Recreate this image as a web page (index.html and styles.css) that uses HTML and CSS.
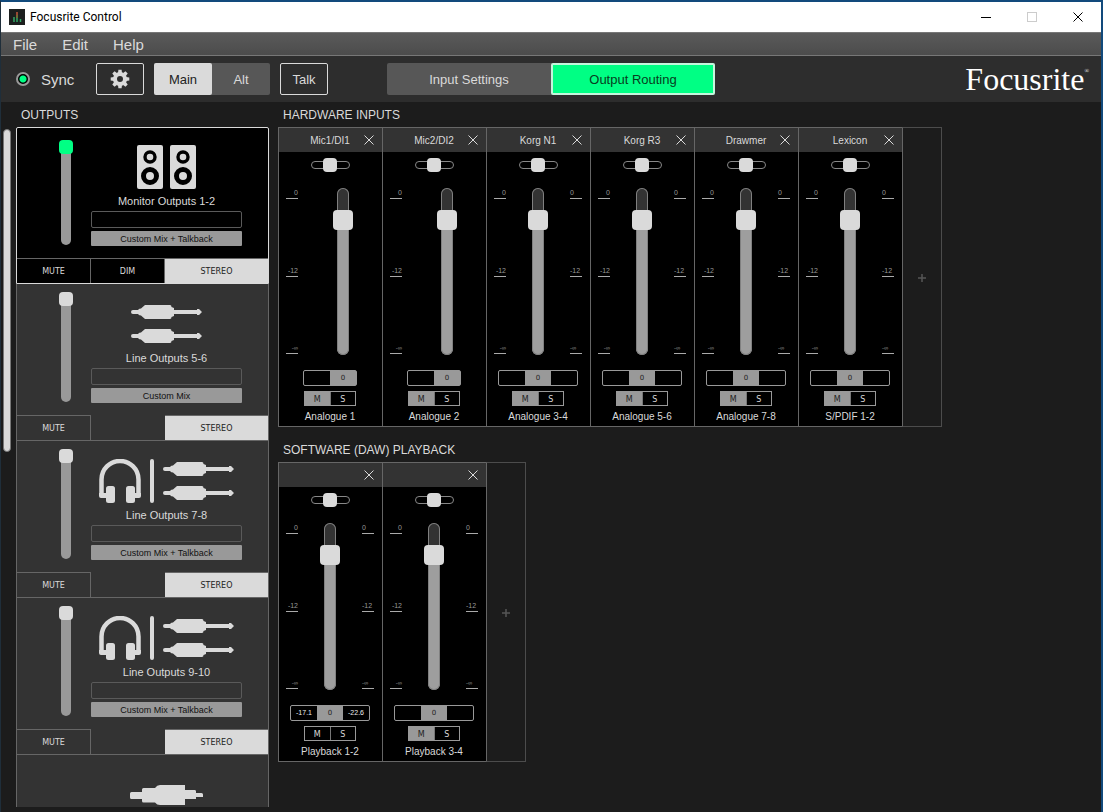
FILE: index.html
```html
<!DOCTYPE html>
<html lang="en">
<head>
<meta charset="utf-8">
<meta name="viewport" content="width=device-width, initial-scale=1">
<title>Focusrite Control</title>
<link rel="stylesheet" href="styles.css">
</head>
<body>
<svg class="sprite" aria-hidden="true">
  <symbol id="x" viewBox="0 0 10 10"><path d="M.5.5l9 9M9.500.5l-9 9" fill="none" stroke="currentColor"/></symbol>
  <symbol id="jack" viewBox="0 0 71 14"><path d="M2 5H7.500V4L10 3.500L14 0H39Q40.500 0 40.500 2L43 3V5H66V4H68L71 7L68 10H66V9H43V11L40.500 12Q40.500 14 39 14H14L10 10.500L7.500 10V9H2Q0 9 0 7T2 5Z"/></symbol>
  <symbol id="jacks" viewBox="0 0 71 38"><use href="#jack" width="71" height="14"/><use href="#jack" y="24" width="71" height="14"/></symbol>
  <symbol id="phones" viewBox="0 0 42 44"><path d="M2.500 37V20.500a18.500 18.500 0 0 1 37 0V37" fill="none" stroke="currentColor" stroke-width="4.500"/><path d="M0 34H8V39H2Q0 39 0 37ZM42 34H34V39H40Q42 39 42 37Z"/><rect x="7" y="27" width="9" height="17" rx="2.500"/><rect x="27" y="27" width="9" height="17" rx="2.500"/></symbol>
  <symbol id="speaker" viewBox="0 0 26 44"><rect width="26" height="44" rx="2"/><g fill="none" stroke="#000"><circle cx="13" cy="12" r="5" stroke-width="3.400"/><circle cx="13" cy="31" r="6.500" stroke-width="5"/></g></symbol>
  <symbol id="rca" viewBox="0 0 73 20"><path d="M1.500 7H12V4.500Q12 3 13.500 3H25Q27 0 30 0H55V5H65Q66 5 66 6.500V8H71.500Q73 8 73 9.500V12H66V14H55V20H30Q27 20 25 17.500H13.500Q12 17.500 12 16V14H1.500Q0 14 0 12.500V8.500Q0 7 1.500 7Z"/></symbol>
  <symbol id="gear" viewBox="-10 -10 20 20"><circle r="5" fill="none" stroke="currentColor" stroke-width="4"/><g id="teeth"><path d="M-2-6L-1.600-9.300H1.600L2-6ZM-2 6L-1.600 9.300H1.600L2 6ZM-6-2L-9.300-1.600V1.600L-6 2ZM6-2L9.300-1.600V1.600L6 2Z"/></g><use href="#teeth" transform="rotate(45)"/></symbol>
</svg>

<div class="window">
  <header class="titlebar">
    <svg class="app-icon" viewBox="0 0 16 16" aria-hidden="true"><rect width="16" height="16" fill="#1c1f1e"/><path d="M5 8V13M11.500 10V13" stroke="#2fa866" stroke-width="1.500"/><path d="M8 3V6" stroke="#c5573a" stroke-width="1.500"/><path d="M8 6V9" stroke="#8a8a3c" stroke-width="1.500"/><path d="M8 9V13" stroke="#2fa866" stroke-width="1.500"/></svg>
    <h1 class="app-title">Focusrite Control</h1>
    <button class="win-btn" aria-label="Minimise"><svg width="10" height="10"><path d="M0 5.500H10" stroke="#000"/></svg></button>
    <button class="win-btn" aria-label="Maximise" disabled><svg width="10" height="10"><rect x=".5" y=".5" width="9" height="9" fill="none" stroke="#ccc"/></svg></button>
    <button class="win-btn" aria-label="Close"><svg width="10" height="10"><use href="#x"/></svg></button>
  </header>

  <nav class="menubar"><button>File</button><button>Edit</button><button>Help</button></nav>

  <div class="toolbar">
    <div class="tools">
      <div class="sync"><span class="led"></span>Sync</div>
      <button class="tool" aria-label="Settings"><svg width="20" height="20"><use href="#gear"/></svg></button>
      <div class="switch"><button class="on">Main</button><button>Alt</button></div>
      <button class="tool">Talk</button>
    </div>
    <div class="tabs"><button>Input Settings</button><button class="active">Output Routing</button></div>
    <div class="logo">Focusrite<sup>®</sup></div>
  </div>

  <main class="content">
    <div class="scrollbar"><div class="scroll-thumb"></div></div>
    <section class="outputs">
      <h2>OUTPUTS</h2>
      <div class="output-list">
        <article class="output selected">
          <div class="output-body">
            <input class="level" type="range" value="100" aria-label="Monitor Outputs 1-2 level">
            <div class="output-info">
              <div class="icons speakers"><svg width="26" height="44"><use href="#speaker"/></svg><svg width="26" height="44"><use href="#speaker"/></svg></div>
              <label for="o1">Monitor Outputs 1-2</label>
              <input class="name-box" id="o1" type="text">
              <button class="source">Custom Mix + Talkback</button>
            </div>
          </div>
          <div class="output-foot"><button>MUTE</button><button>DIM</button><button class="lit">STEREO</button></div>
        </article>
        <article class="output">
          <div class="output-body">
            <input class="level" type="range" value="100" aria-label="Line Outputs 5-6 level">
            <div class="output-info">
              <div class="icons"><svg width="71" height="38"><use href="#jacks"/></svg></div>
              <label for="o2">Line Outputs 5-6</label>
              <input class="name-box" id="o2" type="text">
              <button class="source">Custom Mix</button>
            </div>
          </div>
          <div class="output-foot"><button>MUTE</button><span></span><button class="lit">STEREO</button></div>
        </article>
        <article class="output">
          <div class="output-body">
            <input class="level" type="range" value="100" aria-label="Line Outputs 7-8 level">
            <div class="output-info">
              <div class="icons"><svg width="42" height="44"><use href="#phones"/></svg><span class="bar"></span><svg width="71" height="38"><use href="#jacks"/></svg></div>
              <label for="o3">Line Outputs 7-8</label>
              <input class="name-box" id="o3" type="text">
              <button class="source">Custom Mix + Talkback</button>
            </div>
          </div>
          <div class="output-foot"><button>MUTE</button><span></span><button class="lit">STEREO</button></div>
        </article>
        <article class="output">
          <div class="output-body">
            <input class="level" type="range" value="100" aria-label="Line Outputs 9-10 level">
            <div class="output-info">
              <div class="icons"><svg width="42" height="44"><use href="#phones"/></svg><span class="bar"></span><svg width="71" height="38"><use href="#jacks"/></svg></div>
              <label for="o4">Line Outputs 9-10</label>
              <input class="name-box" id="o4" type="text">
              <button class="source">Custom Mix + Talkback</button>
            </div>
          </div>
          <div class="output-foot"><button>MUTE</button><span></span><button class="lit">STEREO</button></div>
        </article>
        <article class="output">
          <div class="output-body">
            <span class="no-level"></span>
            <div class="output-info">
              <div class="icons"><svg width="73" height="20"><use href="#rca"/></svg></div>
            </div>
          </div>
        </article>
      </div>
    </section>

    <div class="mixer">
      <section>
        <h2>HARDWARE INPUTS</h2>
        <div class="rack">
          <article class="strip mono">
            <header><h3>Mic1/DI1</h3><button aria-label="Remove Mic1/DI1"><svg width="10" height="10"><use href="#x"/></svg></button></header>
            <input class="pan" type="range" value="50" aria-label="Analogue 1 pan">
            <div class="fader-area"><div class="scale"><span>0</span><span>-12</span><span class="inf">-∞</span></div><input class="fader" type="range" value="85" aria-label="Analogue 1 level"></div>
            <div class="readout"><span></span><output>0</output></div>
            <div class="ms"><button class="on">M</button><button>S</button></div>
            <p>Analogue 1</p>
          </article>
          <article class="strip mono">
            <header><h3>Mic2/DI2</h3><button aria-label="Remove Mic2/DI2"><svg width="10" height="10"><use href="#x"/></svg></button></header>
            <input class="pan" type="range" value="50" aria-label="Analogue 2 pan">
            <div class="fader-area"><div class="scale"><span>0</span><span>-12</span><span class="inf">-∞</span></div><input class="fader" type="range" value="85" aria-label="Analogue 2 level"></div>
            <div class="readout"><span></span><output>0</output></div>
            <div class="ms"><button class="on">M</button><button>S</button></div>
            <p>Analogue 2</p>
          </article>
          <article class="strip">
            <header><h3>Korg N1</h3><button aria-label="Remove Korg N1"><svg width="10" height="10"><use href="#x"/></svg></button></header>
            <input class="pan" type="range" value="50" aria-label="Analogue 3-4 pan">
            <div class="fader-area"><div class="scale"><span>0</span><span>-12</span><span class="inf">-∞</span></div><input class="fader" type="range" value="85" aria-label="Analogue 3-4 level"><div class="scale right"><span>0</span><span>-12</span><span class="inf">-∞</span></div></div>
            <div class="readout"><span></span><output>0</output><span></span></div>
            <div class="ms"><button class="on">M</button><button>S</button></div>
            <p>Analogue 3-4</p>
          </article>
          <article class="strip">
            <header><h3>Korg R3</h3><button aria-label="Remove Korg R3"><svg width="10" height="10"><use href="#x"/></svg></button></header>
            <input class="pan" type="range" value="50" aria-label="Analogue 5-6 pan">
            <div class="fader-area"><div class="scale"><span>0</span><span>-12</span><span class="inf">-∞</span></div><input class="fader" type="range" value="85" aria-label="Analogue 5-6 level"><div class="scale right"><span>0</span><span>-12</span><span class="inf">-∞</span></div></div>
            <div class="readout"><span></span><output>0</output><span></span></div>
            <div class="ms"><button class="on">M</button><button>S</button></div>
            <p>Analogue 5-6</p>
          </article>
          <article class="strip">
            <header><h3>Drawmer</h3><button aria-label="Remove Drawmer"><svg width="10" height="10"><use href="#x"/></svg></button></header>
            <input class="pan" type="range" value="50" aria-label="Analogue 7-8 pan">
            <div class="fader-area"><div class="scale"><span>0</span><span>-12</span><span class="inf">-∞</span></div><input class="fader" type="range" value="85" aria-label="Analogue 7-8 level"><div class="scale right"><span>0</span><span>-12</span><span class="inf">-∞</span></div></div>
            <div class="readout"><span></span><output>0</output><span></span></div>
            <div class="ms"><button class="on">M</button><button>S</button></div>
            <p>Analogue 7-8</p>
          </article>
          <article class="strip">
            <header><h3>Lexicon</h3><button aria-label="Remove Lexicon"><svg width="10" height="10"><use href="#x"/></svg></button></header>
            <input class="pan" type="range" value="50" aria-label="S/PDIF 1-2 pan">
            <div class="fader-area"><div class="scale"><span>0</span><span>-12</span><span class="inf">-∞</span></div><input class="fader" type="range" value="85" aria-label="S/PDIF 1-2 level"><div class="scale right"><span>0</span><span>-12</span><span class="inf">-∞</span></div></div>
            <div class="readout"><span></span><output>0</output><span></span></div>
            <div class="ms"><button class="on">M</button><button>S</button></div>
            <p>S/PDIF 1-2</p>
          </article>
          <button class="add" aria-label="Add hardware input"><svg width="8" height="8"><path d="M4 0V8M0 4H8" stroke="currentColor" stroke-width="1.500"/></svg></button>
        </div>
      </section>
      <section>
        <h2>SOFTWARE (DAW) PLAYBACK</h2>
        <div class="rack">
          <article class="strip">
            <header><h3></h3><button aria-label="Remove Playback 1-2"><svg width="10" height="10"><use href="#x"/></svg></button></header>
            <input class="pan" type="range" value="50" aria-label="Playback 1-2 pan">
            <div class="fader-area"><div class="scale"><span>0</span><span>-12</span><span class="inf">-∞</span></div><input class="fader" type="range" value="85" aria-label="Playback 1-2 level"><div class="scale right"><span>0</span><span>-12</span><span class="inf">-∞</span></div></div>
            <div class="readout"><span>-17.1</span><output>0</output><span>-22.6</span></div>
            <div class="ms"><button>M</button><button>S</button></div>
            <p>Playback 1-2</p>
          </article>
          <article class="strip">
            <header><h3></h3><button aria-label="Remove Playback 3-4"><svg width="10" height="10"><use href="#x"/></svg></button></header>
            <input class="pan" type="range" value="50" aria-label="Playback 3-4 pan">
            <div class="fader-area"><div class="scale"><span>0</span><span>-12</span><span class="inf">-∞</span></div><input class="fader" type="range" value="85" aria-label="Playback 3-4 level"><div class="scale right"><span>0</span><span>-12</span><span class="inf">-∞</span></div></div>
            <div class="readout"><span></span><output>0</output><span></span></div>
            <div class="ms"><button class="on">M</button><button>S</button></div>
            <p>Playback 3-4</p>
          </article>
          <button class="add" aria-label="Add software playback"><svg width="8" height="8"><path d="M4 0V8M0 4H8" stroke="currentColor" stroke-width="1.500"/></svg></button>
        </div>
      </section>
    </div>
  </main>
</div>
</body>
</html>
```
FILE: styles.css
```css
:root {
  --bg: #1c1c1c;
  --panel: #333;
  --line: #666;
  --light: #dadada;
  --mid: #999;
  --green: #00ff84;
  --ui: "Liberation Sans", Arial, sans-serif;
  --small: "DejaVu Sans", Verdana, sans-serif;
}

* { box-sizing: border-box; }

body {
  margin: 0;
  background: var(--bg);
  color: var(--light);
  font-family: var(--ui);
}

h1, h2, h3, p { margin: 0; font-weight: normal; }

button, input { font-family: inherit; color: inherit; margin: 0; }

button {
  border: 0;
  padding: 0;
  background: none;
}

svg { display: block; fill: currentColor; }

.sprite { position: absolute; width: 0; height: 0; }

.window {
  display: flex;
  flex-direction: column;
  height: 100vh;
  overflow: hidden;
  border: solid #124a7c;
  border-width: 2px 2px 0 1px;
  border-left-color: #1f2e3a;
}

/* Title bar */
.titlebar {
  display: flex;
  align-items: center;
  flex: none;
  height: 30px;
  padding-left: 8px;
  background: #fff;
  color: #000;
}

.app-icon { width: 16px; height: 16px; }

.app-title {
  flex: 1;
  margin-left: 5px;
  font: 12px/16px Roboto, "Open Sans", sans-serif;
}

.win-btn {
  display: grid;
  place-items: center;
  width: 46px;
  height: 100%;
  color: #000;
}

/* Menu bar */
.menubar {
  display: flex;
  flex: none;
  gap: 25px;
  height: 24px;
  padding-left: 12px;
  border: solid #777;
  border-width: 1px 0;
  background: linear-gradient(#5a5a5a, #4c4c4c);
}

.menubar button { font-size: 15px; }

/* Toolbar */
.toolbar {
  display: grid;
  grid-template-columns: 1fr auto 1fr;
  align-items: center;
  flex: none;
  height: 46px;
  padding: 0 12px;
  background: #2d2d2d;
}

.tools { display: flex; gap: 10px; padding-left: 3px; }

.sync {
  display: flex;
  align-items: center;
  gap: 11px;
  width: 70px;
  font-size: 15px;
}

.led {
  width: 14px;
  height: 14px;
  border: 2px solid #999;
  border-radius: 50%;
  background: radial-gradient(circle, var(--green) 0 3px, #000 4px);
}

.tool {
  display: grid;
  place-items: center;
  width: 48px;
  height: 32px;
  border: 1px solid var(--light);
  border-radius: 2px;
  font-size: 13px;
}

.switch, .tabs {
  display: flex;
  border-radius: 2px;
  background: #575757;
}

.switch button { width: 58px; height: 32px; font-size: 13px; }

.switch .on {
  border-radius: 2px;
  background: var(--light);
  color: #222;
}

.tabs button { width: 164px; height: 32px; font-size: 13px; }

.tabs .active {
  border: 2px solid #c4f5dc;
  border-radius: 2px;
  background: var(--green);
  color: #083d20;
}

.logo {
  display: flex;
  justify-content: flex-end;
  color: #fff;
  font: 32px/40px "Liberation Serif", "Times New Roman", serif;
}

.logo sup { font-size: 6px; line-height: 24px; vertical-align: top; }

/* Content */
.content {
  display: flex;
  flex: 1;
  min-height: 0;
  padding-bottom: 5px;
}

.scrollbar { flex: none; width: 15px; padding: 27px 5px 0 2px; }

.scroll-thumb {
  height: 323px;
  border: 1px solid #777;
  border-radius: 4px;
  background: var(--light);
}

h2 {
  height: 25px;
  padding-left: 5px;
  font-size: 12px;
  line-height: 27px;
}

.outputs {
  display: flex;
  flex-direction: column;
  flex: none;
  width: 253px;
}

.output-list { flex: 1; min-height: 0; overflow: hidden; }

.output {
  border: solid var(--line);
  border-width: 0 1px 1px;
  background: var(--panel);
}

.output.selected {
  border-width: 1px;
  border-color: var(--light);
  border-radius: 2px 2px 0 0;
  background: #000;
}

.output-body {
  display: flex;
  gap: 18px;
  height: 131px;
  padding: 8px 26px 0 42px;
}

.selected .output-body { height: 130px; padding-top: 12px; }

.output-info {
  display: flex;
  flex-direction: column;
  flex: 1;
  padding-top: 10px;
}

.selected .output-info { padding-top: 5px; }

.icons {
  display: flex;
  align-items: center;
  justify-content: center;
  gap: 9px;
  height: 44px;
}

.icons.speakers { gap: 7px; }

.bar {
  width: 4px;
  height: 44px;
  border-radius: 2px;
  background: var(--light);
}

.output-info label {
  margin: 5px 0 3px;
  font-size: 11px;
  line-height: 14px;
  text-align: center;
}

.name-box {
  width: 100%;
  height: 17px;
  border: 1px solid #5a5a5a;
  border-radius: 2px;
  background: none;
  font-size: 10px;
}

.source {
  height: 15px;
  margin-top: 3px;
  border-radius: 1px;
  background: var(--mid);
  color: #111;
  font-size: 9px;
}

.output-foot {
  display: grid;
  grid-template-columns: 74px 74px 1fr;
  height: 25px;
}

.output-foot button {
  padding-top: 2px;
  border: solid var(--line);
  border-width: 1px 1px 0 0;
  font: 8px/10px var(--small);
}

.output-foot .lit {
  border-right: 0;
  background: var(--light);
  color: #222;
}

/* Sliders */
input[type="range"] {
  appearance: none;
  flex: none;
  background: none;
}

input[type="range"]::-webkit-slider-thumb {
  appearance: none;
  border-radius: 4px;
  background: var(--light);
}

.level, .fader { writing-mode: vertical-lr; direction: rtl; }

.level { width: 14px; height: 110px; }
.no-level { width: 14px; }
.selected .level { height: 105px; }

.level::-webkit-slider-runnable-track {
  width: 10px;
  height: 100%;
  border-radius: 5px;
  background: var(--mid);
}

.level::-webkit-slider-thumb { width: 14px; height: 14px; margin-left: -2px; }
.selected .level::-webkit-slider-thumb { background: var(--green); }

.fader { width: 20px; height: 167px; }

.fader::-webkit-slider-runnable-track {
  width: 12px;
  height: 100%;
  border-radius: 6px;
  background: linear-gradient(#333 0 20%, #9e9e9e 20%);
  box-shadow: inset 0 0 0 1px #808080;
}

.fader::-webkit-slider-thumb {
  width: 20px;
  height: 20px;
  margin-left: -4px;
  border-radius: 5px;
}

.pan { width: 39px; height: 14px; }

.pan::-webkit-slider-runnable-track {
  height: 8px;
  border: 1px solid #888;
  border-radius: 4px;
}

.pan::-webkit-slider-thumb { width: 14px; height: 14px; margin-top: -4px; }

/* Mixer */
.mixer {
  display: flex;
  flex-direction: column;
  gap: 10px;
  flex: 1;
  min-width: 0;
  padding-left: 9px;
}

.rack { display: flex; }

.strip {
  display: flex;
  flex-direction: column;
  align-items: center;
  flex: none;
  width: 104px;
  padding-right: 1px;
  border: solid var(--line);
  border-width: 1px 0 1px 1px;
  background: linear-gradient(var(--panel) 24px, #000 24px);
}

.strip header {
  display: grid;
  grid-template-columns: 24px 1fr 24px;
  align-items: center;
  width: 100%;
  height: 24px;
  margin-bottom: 6px;
}

.strip h3 {
  grid-column: 2;
  font-size: 10px;
  text-align: center;
}

.strip header button { grid-column: 3; padding-left: 7px; }

.fader-area {
  display: flex;
  justify-content: space-between;
  width: 100%;
  height: 167px;
  margin-top: 16px;
  padding: 0 7px;
}

.mono .fader-area { padding-right: 28px; }

.scale {
  display: flex;
  flex-direction: column;
  justify-content: space-between;
  width: 12px;
  height: 166px;
}

.scale span {
  height: 11px;
  border-bottom: 1px solid #aaa;
  color: #999;
  font-size: 7px;
  line-height: 10px;
  text-align: right;
  white-space: nowrap;
}

.scale .inf { font-size: 6px; }
.scale.right span { text-align: left; }

.readout {
  display: flex;
  height: 16px;
  margin-top: 15px;
  border: 1px solid var(--mid);
  border-radius: 2px;
}

.readout > * {
  width: 26px;
  color: #eee;
  font-size: 7px;
  line-height: 14px;
  text-align: center;
}

.readout output {
  background: var(--mid);
  color: #222;
  font-family: var(--small);
}

.ms {
  display: flex;
  width: 52px;
  height: 15px;
  margin-top: 5px;
  border: 1px solid var(--mid);
}

.ms button { flex: 1; padding-top: 2px; font: 8px/11px var(--small); }
.ms button + button { border-left: 1px solid #777; }
.ms .on { background: var(--mid); color: #222; }

.strip p {
  margin: 4px 0 3px;
  font-size: 10px;
  line-height: 13px;
}

.add {
  display: grid;
  place-items: center;
  width: 40px;
  padding-top: 2px;
  border: 1px solid #4c4c4c;
  border-left-color: var(--line);
  color: #555;
}
```
